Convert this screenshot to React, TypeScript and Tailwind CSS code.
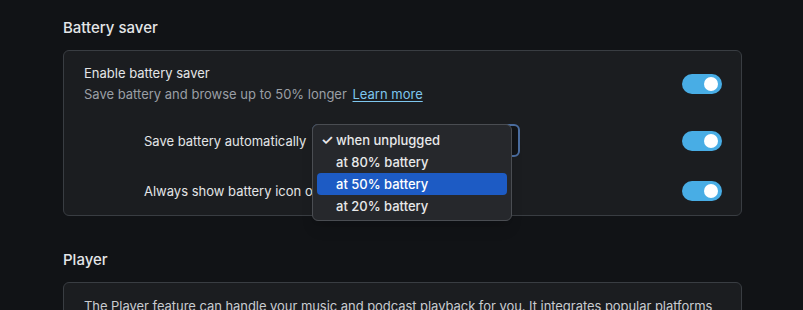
import React from "react";

function Toggle() {
  return (
    <div className="relative h-[20px] w-[40px] shrink-0 rounded-full bg-[#48ade5]">
      <div className="absolute right-[4px] top-[3px] h-[14px] w-[14px] rounded-full bg-white" />
    </div>
  );
}

export default function App() {
  const items = ["when unplugged", "at 80% battery", "at 50% battery", "at 20% battery"];
  return (
    <div
      className="h-[310px] w-[803px] overflow-hidden bg-[#111316] pl-[63px] pr-[61px] text-[13px]"
      style={{ fontFamily: "Inter, 'Noto Sans', sans-serif" }}
    >
      <h2 className="pt-[18px] text-[15px] font-medium leading-[20px] text-[#e4e6e8]">Battery saver</h2>
      <div className="mt-[12px] rounded-[6px] border border-[#393d42] bg-[#1b1d20] pl-[20px] pr-[19px] pt-[13px] pb-[14px]">
        <div className="flex items-center justify-between">
          <div>
            <div className="leading-[18px] text-[#e3e5e7]">Enable battery saver</div>
            <div className="mt-[3px] leading-[18px] text-[#9a9fa5]">
              Save battery and browse up to 50% longer{" "}
              <span className="ml-[2px] text-[#7ec6ee] underline underline-offset-2">Learn more</span>
            </div>
          </div>
          <Toggle />
        </div>
        <div className="mt-[21px] flex h-[33px] items-center justify-between">
          <div className="flex items-center">
            <div className="w-[228px] pl-[60px] leading-[18px] text-[#e3e5e7] whitespace-nowrap">Save battery automatically</div>
            <div className="relative">
              <div className="h-[33px] w-[208px] rounded-[6px] border-2 border-[#4a6c9e] bg-[#111316]" />
              <div className="absolute left-0 top-0 z-10 w-[200px] rounded-[6px] border border-[#4a4d52] bg-[#26282c] px-[4px] pt-[4px] pb-[3px] shadow-lg">
                {items.map((t, i) => (
                  <div
                    key={t}
                    className={`relative h-[22px] rounded-[4px] pl-[19px] font-medium leading-[22px] ${
                      i === 2 ? "bg-[#1d5bc4] text-white" : "text-[#e8e9ea]"
                    }`}
                  >
                    {i === 0 && <span className="absolute left-[4px] top-0 text-[14px] font-semibold">✓</span>}
                    {t}
                  </div>
                ))}
              </div>
            </div>
          </div>
          <Toggle />
        </div>
        <div className="mt-[24px] flex items-center justify-between">
          <div className="pl-[60px] leading-[18px] text-[#e3e5e7] whitespace-nowrap">Always show battery icon on toolbar</div>
          <Toggle />
        </div>
      </div>
      <h2 className="mt-[34px] text-[15px] font-medium leading-[20px] text-[#e4e6e8]">Player</h2>
      <div className="mt-[12px] rounded-[6px] border border-[#393d42] bg-[#1b1d20] px-[20px] pt-[14px] pb-[14px]">
        <div className="leading-[18px] tracking-[-0.05px] text-[#c9ccd0] whitespace-nowrap">
          The Player feature can handle your music and podcast playback for you. It integrates popular platforms
        </div>
      </div>
    </div>
  );
}
